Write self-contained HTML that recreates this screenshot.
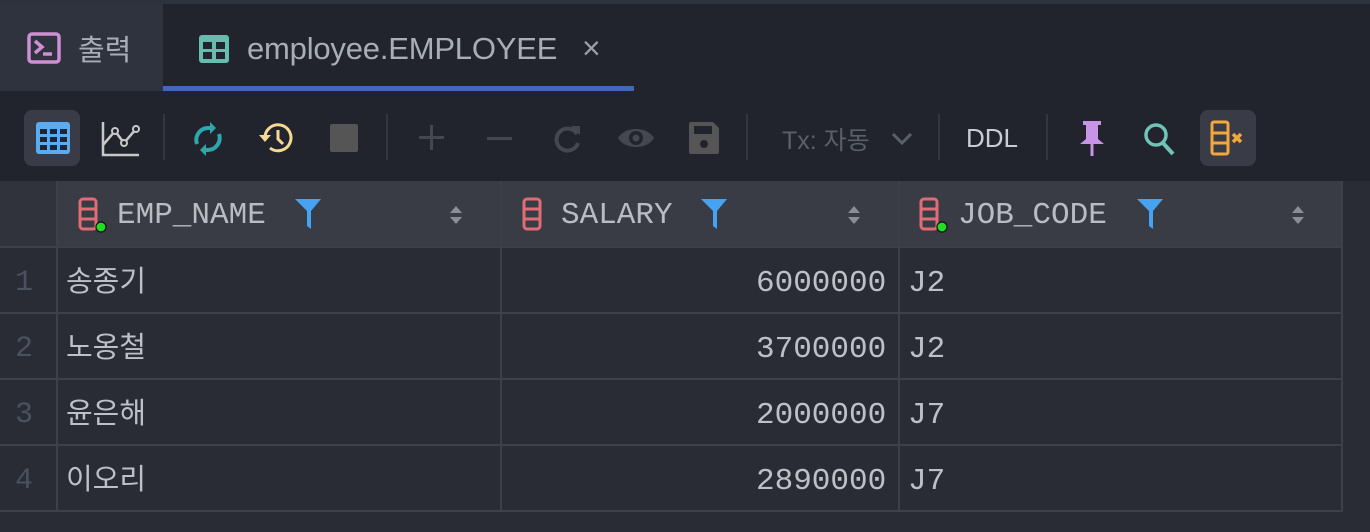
<!DOCTYPE html>
<html><head><meta charset="utf-8"><style>
*{margin:0;padding:0;box-sizing:border-box}
body{width:1370px;height:532px;background:#292c35;overflow:hidden;position:relative;font-family:"Liberation Sans","Noto Sans CJK KR",sans-serif}
.abs{position:absolute}
.mono{font-family:"Liberation Mono","Noto Sans CJK KR",monospace}
</style></head><body>
<!-- tab bar -->
<div class="abs" style="left:0;top:0;width:1370px;height:91px;background:#21242c;border-top:4px solid #2e323c"></div>
<div class="abs" style="left:0;top:4px;width:163px;height:87px;background:#2f333e"></div>
<div class="abs" style="left:163px;top:86px;width:471px;height:5px;background:#4069bb"></div>
<svg class="abs" style="left:27px;top:32px" width="36" height="34" viewBox="0 0 36 34"><rect x="2" y="2" width="30" height="28" rx="3" fill="none" stroke="#cf8fd6" stroke-width="3.5"/><path d="M8 9l7 6-7 6" fill="none" stroke="#cf8fd6" stroke-width="3.5"/><path d="M16 22h9" stroke="#cf8fd6" stroke-width="3.5"/></svg>
<div class="abs" style="left:78px;top:27px;font-size:29px;color:#a9adb5">출력</div>
<svg class="abs" style="left:198px;top:34px" width="32" height="30" viewBox="0 0 32 30"><rect x="1" y="1" width="30" height="28" rx="3" fill="#67bcb0"/><rect x="5" y="8" width="9" height="7" fill="#21242c"/><rect x="18" y="8" width="9" height="7" fill="#21242c"/><rect x="5" y="18" width="9" height="7" fill="#21242c"/><rect x="18" y="18" width="9" height="7" fill="#21242c"/></svg>
<div class="abs" style="left:247px;top:31px;font-size:31px;color:#a9adb5;letter-spacing:-0.2px">employee.EMPLOYEE</div>
<div class="abs" style="left:582px;top:30px;font-size:32px;color:#9a9ea6">×</div>
<!-- toolbar -->
<div class="abs" style="left:0;top:91px;width:1370px;height:90px;background:#21242c"></div>
<div class="abs" style="left:24px;top:110px;width:56px;height:56px;border-radius:8px;background:#393c46"></div>
<svg class="abs" style="left:36px;top:122px" width="34" height="32" viewBox="0 0 34 32"><rect x="0" y="0" width="34" height="32" rx="3" fill="#5aabf0"/><g fill="#21242c"><rect x="4" y="7" width="7" height="5"/><rect x="14" y="7" width="7" height="5"/><rect x="24" y="7" width="7" height="5"/><rect x="4" y="15" width="7" height="5"/><rect x="14" y="15" width="7" height="5"/><rect x="24" y="15" width="7" height="5"/><rect x="4" y="23" width="7" height="5"/><rect x="14" y="23" width="7" height="5"/><rect x="24" y="23" width="7" height="5"/></g></svg>
<svg class="abs" style="left:101px;top:121px" width="40" height="36" viewBox="0 0 40 36"><path d="M2 1v33h36" fill="none" stroke="#c8c8c8" stroke-width="2.5"/><path d="M2 24l12-14 9 12 12-14" fill="none" stroke="#c8c8c8" stroke-width="2.5"/><circle cx="14" cy="10" r="3" fill="#21242c" stroke="#c8c8c8" stroke-width="2"/><circle cx="23" cy="22" r="3" fill="#21242c" stroke="#c8c8c8" stroke-width="2"/><circle cx="35" cy="8" r="3" fill="#21242c" stroke="#c8c8c8" stroke-width="2"/></svg>
<div class="abs" style="left:163px;top:114px;width:2px;height:46px;background:#33363f"></div>
<svg class="abs" style="left:192px;top:120px" width="32" height="38" viewBox="0 0 32 38"><path d="M5 24A12 12 0 0 1 16 8h4" fill="none" stroke="#2fa6ab" stroke-width="4"/><path d="M18 2l6 6-6 6z" fill="#2fa6ab"/><path d="M27 14A12 12 0 0 1 16 30h-4" fill="none" stroke="#2fa6ab" stroke-width="4"/><path d="M14 24l-6 6 6 6z" fill="#2fa6ab"/></svg>
<svg class="abs" style="left:258px;top:121px" width="36" height="34" viewBox="0 0 36 34"><path d="M7 17A13 13 0 1 1 12 27" fill="none" stroke="#f5d894" stroke-width="3"/><path d="M1 14h12l-6 7z" fill="#f5d894"/><path d="M20 9v9l5 5" fill="none" stroke="#f5d894" stroke-width="3"/></svg>
<div class="abs" style="left:330px;top:124px;width:28px;height:28px;background:#555;border-radius:2px"></div>
<div class="abs" style="left:386px;top:114px;width:2px;height:46px;background:#33363f"></div>
<div class="abs" style="left:419px;top:136px;width:25px;height:3px;background:#444750"></div>
<div class="abs" style="left:430px;top:125px;width:3px;height:25px;background:#444750"></div>
<div class="abs" style="left:487px;top:137px;width:25px;height:3px;background:#444750"></div>
<svg class="abs" style="left:553px;top:122px" width="30" height="32" viewBox="0 0 30 32"><path d="M24 12A11 11 0 1 0 25 21" fill="none" stroke="#444750" stroke-width="4"/><path d="M18 4h9v9z" fill="#444750"/></svg>
<svg class="abs" style="left:617px;top:124px" width="38" height="28" viewBox="0 0 38 28"><path d="M1 14C8 2 30 2 37 14 30 26 8 26 1 14z" fill="#444750"/><circle cx="19" cy="14" r="7" fill="#21242c"/><circle cx="19" cy="14" r="3.5" fill="#444750"/></svg>
<svg class="abs" style="left:688px;top:121px" width="32" height="34" viewBox="0 0 32 34"><path d="M3 1h22l6 6v24a2 2 0 0 1-2 2H3a2 2 0 0 1-2-2V3a2 2 0 0 1 2-2z" fill="#555"/><rect x="6" y="5" width="18" height="8" fill="#21242c"/><circle cx="16" cy="23" r="4" fill="#21242c"/></svg>
<div class="abs" style="left:746px;top:114px;width:2px;height:46px;background:#33363f"></div>
<div class="abs" style="left:782px;top:121px;font-size:25px;color:#5a5f69">Tx: 자동</div>
<svg class="abs" style="left:890px;top:131px" width="24" height="16" viewBox="0 0 24 16"><path d="M3 3l9 9 9-9" fill="none" stroke="#5a5f69" stroke-width="3"/></svg>
<div class="abs" style="left:938px;top:114px;width:2px;height:46px;background:#33363f"></div>
<div class="abs" style="left:966px;top:123px;font-size:26px;color:#c9ccd3">DDL</div>
<div class="abs" style="left:1046px;top:114px;width:2px;height:46px;background:#33363f"></div>
<svg class="abs" style="left:1078px;top:120px" width="28" height="38" viewBox="0 0 28 38"><path d="M5 1h18v4h-3v14l6 5H2l6-5V5H5z" fill="#c794e6"/><path d="M14 24v12" stroke="#c794e6" stroke-width="3"/></svg>
<svg class="abs" style="left:1143px;top:121px" width="34" height="36" viewBox="0 0 34 36"><circle cx="13" cy="14" r="10" fill="none" stroke="#6fc3b8" stroke-width="3.5"/><path d="M20 22l10 11" stroke="#6fc3b8" stroke-width="4"/></svg>
<div class="abs" style="left:1200px;top:110px;width:56px;height:56px;border-radius:8px;background:#393c46"></div>
<svg class="abs" style="left:1210px;top:120px" width="38" height="36" viewBox="0 0 38 36"><rect x="2" y="2" width="16" height="32" rx="2" fill="none" stroke="#f1a73c" stroke-width="3"/><path d="M2 13h16M2 23h16" stroke="#f1a73c" stroke-width="3"/><path d="M23 14l8 8M31 14l-8 8" stroke="#f1a73c" stroke-width="3.5"/></svg>
<!-- header -->
<div class="abs" style="left:0;top:181px;width:1342px;height:67px;background:#393c45"></div>
<div class="abs" style="left:1342px;top:181px;width:28px;height:351px;background:#292c35"></div>
<div class="abs" style="left:0;top:181px;width:57px;height:67px;background:#30333c"></div>
<!-- grid lines -->
<div class="abs" style="left:56px;top:181px;width:2px;height:331px;background:#3d4049"></div>
<div class="abs" style="left:500px;top:181px;width:2px;height:331px;background:#3d4049"></div>
<div class="abs" style="left:898px;top:181px;width:2px;height:331px;background:#3d4049"></div>
<div class="abs" style="left:1341px;top:181px;width:2px;height:331px;background:#3d4049"></div>
<div class="abs" style="left:0;top:246px;width:1342px;height:2px;background:#3d4049"></div>
<div class="abs" style="left:0;top:312px;width:1342px;height:2px;background:#3d4049"></div>
<div class="abs" style="left:0;top:378px;width:1342px;height:2px;background:#3d4049"></div>
<div class="abs" style="left:0;top:444px;width:1342px;height:2px;background:#3d4049"></div>
<div class="abs" style="left:0;top:510px;width:1342px;height:2px;background:#3d4049"></div>
<!-- header cells -->
<svg class="abs" style="left:78px;top:197px" width="30" height="36" viewBox="0 0 30 36"><rect x="2" y="2" width="16" height="30" rx="3" fill="none" stroke="#e06c75" stroke-width="3"/><path d="M2 12h16M2 22h16" stroke="#e06c75" stroke-width="3"/><circle cx="23" cy="30" r="5" fill="#22dd22" stroke="#111" stroke-width="1.2"/></svg>
<div class="abs mono" style="left:117px;top:198px;font-size:31px;color:#b9bcc3">EMP_NAME</div>
<svg class="abs" style="left:294px;top:198px" width="28" height="32" viewBox="0 0 28 32"><path d="M1 1h26l-10 12v18l-4-3V13z" fill="#46a3f2"/></svg>
<svg class="abs" style="left:449px;top:205px" width="14" height="20" viewBox="0 0 14 20"><path d="M7 1l6 7H1zM7 19l6-7H1z" fill="#8a8e96"/></svg>
<svg class="abs" style="left:522px;top:197px" width="30" height="36" viewBox="0 0 30 36"><rect x="2" y="2" width="16" height="30" rx="3" fill="none" stroke="#e06c75" stroke-width="3"/><path d="M2 12h16M2 22h16" stroke="#e06c75" stroke-width="3"/></svg>
<div class="abs mono" style="left:561px;top:198px;font-size:31px;color:#b9bcc3">SALARY</div>
<svg class="abs" style="left:700px;top:198px" width="28" height="32" viewBox="0 0 28 32"><path d="M1 1h26l-10 12v18l-4-3V13z" fill="#46a3f2"/></svg>
<svg class="abs" style="left:847px;top:205px" width="14" height="20" viewBox="0 0 14 20"><path d="M7 1l6 7H1zM7 19l6-7H1z" fill="#8a8e96"/></svg>
<svg class="abs" style="left:919px;top:197px" width="30" height="36" viewBox="0 0 30 36"><rect x="2" y="2" width="16" height="30" rx="3" fill="none" stroke="#e06c75" stroke-width="3"/><path d="M2 12h16M2 22h16" stroke="#e06c75" stroke-width="3"/><circle cx="23" cy="30" r="5" fill="#22dd22" stroke="#111" stroke-width="1.2"/></svg>
<div class="abs mono" style="left:958px;top:198px;font-size:31px;color:#b9bcc3">JOB_CODE</div>
<svg class="abs" style="left:1136px;top:198px" width="28" height="32" viewBox="0 0 28 32"><path d="M1 1h26l-10 12v18l-4-3V13z" fill="#46a3f2"/></svg>
<svg class="abs" style="left:1291px;top:205px" width="14" height="20" viewBox="0 0 14 20"><path d="M7 1l6 7H1zM7 19l6-7H1z" fill="#8a8e96"/></svg>
<!-- rows -->
<div class="abs mono" style="left:15px;top:263px;font-size:30px;color:#4b5160;line-height:40px">1<br><span style="display:block;margin-top:26px">2</span><span style="display:block;margin-top:26px">3</span><span style="display:block;margin-top:26px">4</span></div>
<div class="abs" style="left:66px;top:262px;font-size:29px;color:#bdc0c6;line-height:40px">송종기</div>
<div class="abs" style="left:66px;top:328px;font-size:29px;color:#bdc0c6;line-height:40px">노옹철</div>
<div class="abs" style="left:66px;top:394px;font-size:29px;color:#bdc0c6;line-height:40px">윤은해</div>
<div class="abs" style="left:66px;top:460px;font-size:29px;color:#bdc0c6;line-height:40px">이오리</div>
<div class="abs mono" style="left:756px;top:264px;font-size:31px;color:#bdc0c6;line-height:40px">6000000</div>
<div class="abs mono" style="left:756px;top:330px;font-size:31px;color:#bdc0c6;line-height:40px">3700000</div>
<div class="abs mono" style="left:756px;top:396px;font-size:31px;color:#bdc0c6;line-height:40px">2000000</div>
<div class="abs mono" style="left:756px;top:462px;font-size:31px;color:#bdc0c6;line-height:40px">2890000</div>
<div class="abs mono" style="left:908px;top:264px;font-size:31px;color:#bdc0c6;line-height:40px">J2</div>
<div class="abs mono" style="left:908px;top:330px;font-size:31px;color:#bdc0c6;line-height:40px">J2</div>
<div class="abs mono" style="left:908px;top:396px;font-size:31px;color:#bdc0c6;line-height:40px">J7</div>
<div class="abs mono" style="left:908px;top:462px;font-size:31px;color:#bdc0c6;line-height:40px">J7</div>
</body></html>
